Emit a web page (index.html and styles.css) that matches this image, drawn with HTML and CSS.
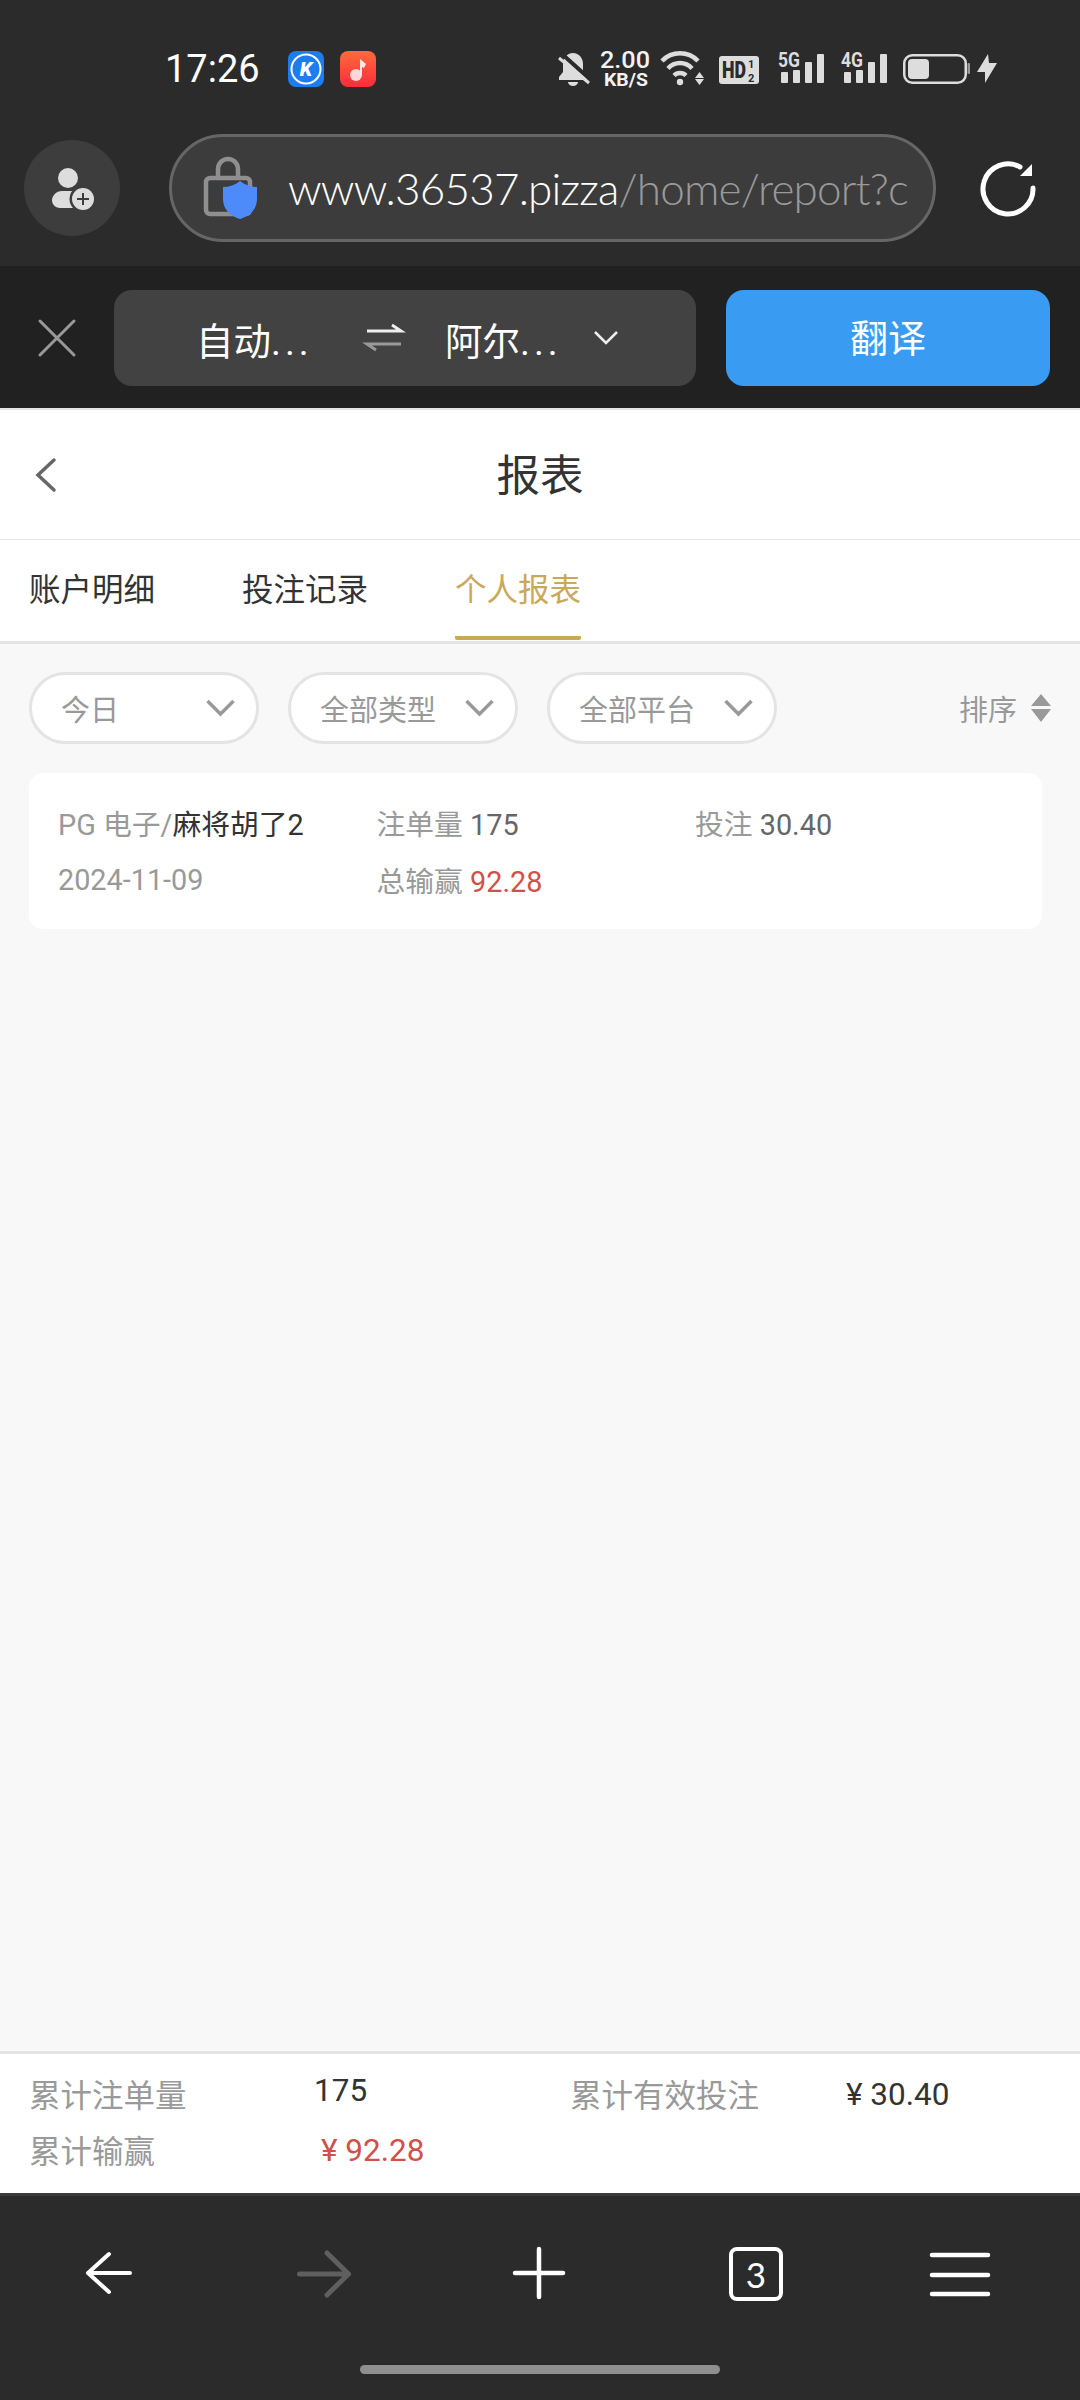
FILE: index.html
```html
<!DOCTYPE html>
<html>
<head>
	<meta http-equiv="Content-Type" content="text/html; charset=utf-8" />
	<title>报表</title>
	<link rel="stylesheet" href="styles.css">
</head>
<body>
	<!-- browser top: status bar and address bar -->
	<div class="top">
		<div class="status">
			<span class="time">17:26</span>
			<svg class="app-icon first" viewBox="0 0 36 36">
				<rect width="36" height="36" rx="8" fill="#1b7df0"/>
				<circle cx="18" cy="18" r="14.500" fill="none" stroke="#fff" stroke-width="2"/>
				<text x="18" y="25" text-anchor="middle" class="k-letter">K</text>
			</svg>
			<svg class="app-icon" viewBox="0 0 36 36">
				<defs><linearGradient id="red" x1="0" y1="0" x2="0" y2="1"><stop offset="0" stop-color="#ff6a3c"/><stop offset="1" stop-color="#fb2c3c"/></linearGradient></defs>
				<rect width="36" height="36" rx="8" fill="url(#red)"/>
				<circle cx="16" cy="24" r="6" fill="#ffd9d9"/>
				<path d="M20 24V8l6 5-2 4-2-1v8z" fill="#ffe9e4"/>
			</svg>
			<div class="status-icons">
				<svg width="41" height="40" viewBox="0 0 41 40">
					<path d="M14 4c-6 0-10 5-10 11v8l-4 5v3h28v-3l-4-5v-8c0-6-4-11-10-11z" fill="#ddd"/>
					<path d="M9 33a5 4 0 0 0 10 0z" fill="#ddd"/>
					<path d="M3 5l30 27" stroke="#2b2b2b" stroke-width="4"/>
					<path d="M0 9l30 25" stroke="#ddd" stroke-width="3"/>
				</svg>
				<svg width="60" height="40" viewBox="0 0 60 40">
					<text x="0" y="19" class="speed" textLength="50" lengthAdjust="spacingAndGlyphs">2.00</text>
					<text x="4" y="37" class="speed-unit" textLength="44" lengthAdjust="spacingAndGlyphs">KB/S</text>
				</svg>
				<svg width="59" height="40" viewBox="0 0 59 40">
					<g fill="none" stroke="#ddd" stroke-width="4.500">
						<path d="M2 12A25 25 0 0 1 38 12"/>
						<path d="M8 19.500A16 16 0 0 1 32 19.500"/>
						<path d="M14 26.500A8.500 8.500 0 0 1 26 26.500"/>
					</g>
					<circle cx="20" cy="33" r="3.200" fill="#ddd"/>
					<path d="M39.500 23l4.500 6h-9zM35 30h9l-4.500 6z" fill="#ddd"/>
				</svg>
				<svg width="59" height="40" viewBox="0 0 59 40">
					<rect y="7" width="40" height="28" rx="3" fill="#ddd"/>
					<text x="3" y="29" class="hd" textLength="24" lengthAdjust="spacingAndGlyphs">HD</text>
					<text x="29" y="19" class="hd-small">1</text>
					<text x="29" y="33" class="hd-small">2</text>
				</svg>
				<svg width="63" height="40" viewBox="0 0 63 40">
					<text x="0" y="18" class="net" textLength="22" lengthAdjust="spacingAndGlyphs">5G</text>
					<rect x="3" y="23" width="7" height="11" rx="1" fill="#ddd"/>
					<rect x="15" y="21" width="7" height="13" rx="1" fill="#ddd"/>
					<rect x="27" y="13" width="7" height="21" rx="1" fill="#ddd"/>
					<rect x="39" y="5" width="7" height="29" rx="1" fill="#ddd"/>
				</svg>
				<svg width="62" height="40" viewBox="0 0 62 40">
					<text x="0" y="18" class="net" textLength="22" lengthAdjust="spacingAndGlyphs">4G</text>
					<rect x="3" y="23" width="7" height="11" rx="1" fill="#ddd"/>
					<rect x="15" y="21" width="7" height="13" rx="1" fill="#ddd"/>
					<rect x="27" y="13" width="7" height="21" rx="1" fill="#ddd"/>
					<rect x="39" y="5" width="7" height="29" rx="1" fill="#ddd"/>
				</svg>
				<svg width="74" height="40" viewBox="0 0 74 40">
					<rect x="1.250" y="6.250" width="61.500" height="27.500" rx="8" fill="none" stroke="#ddd" stroke-width="2.500"/>
					<rect x="5" y="10" width="21" height="20" rx="4" fill="#ddd"/>
					<rect x="64.500" y="14" width="2.500" height="11" rx="1" fill="#999"/>
				</svg>
				<svg width="20" height="40" viewBox="0 0 20 40">
					<path d="M11 5L0 23h8v11l12-20h-8z" fill="#ddd"/>
				</svg>
			</div>
		</div>
		<div class="address-row">
			<div class="avatar">
				<svg width="96" height="96" viewBox="0 0 96 96">
					<circle cx="44" cy="38" r="10" fill="#ddd"/>
					<path d="M38 51h16c6 0 10 4 10 9s-4 8-10 8H36c-5 0-8-4-8-8s4-9 10-9z" fill="#ddd"/>
					<circle cx="59" cy="59" r="13.500" fill="#3d3d3d"/>
					<circle cx="59" cy="59" r="11" fill="#ddd"/>
					<path d="M59 53v12M53 59h12" stroke="#3d3d3d" stroke-width="2"/>
				</svg>
			</div>
			<div class="address">
				<svg class="lock" width="53" height="62" viewBox="0 0 53 62">
					<rect x="2" y="21" width="44" height="36" rx="4" fill="none" stroke="#8f8f8f" stroke-width="4.500"/>
					<path d="M14 21V12a10 10 0 0 1 20 0v9" fill="none" stroke="#8f8f8f" stroke-width="4.500"/>
					<path d="M36 24c5 4 11 6 17 6v12c0 10-7 17-17 20-10-3-17-10-17-20V30c6 0 12-2 17-6z" fill="#4d8bfb"/>
				</svg>
				<span class="url">www.36537.pizza<span class="url-path">/home/report?c</span></span>
			</div>
			<svg class="refresh" width="60" height="60" viewBox="0 0 60 60">
				<path d="M42 9A25 25 0 1 0 55 30" fill="none" stroke="#fff" stroke-width="5" stroke-linecap="round"/>
				<path d="M54 6v12H42z" fill="#fff"/>
			</svg>
		</div>
	</div>

	<!-- translate bar -->
	<div class="translate">
		<svg class="close" width="36" height="36" viewBox="0 0 36 36">
			<path d="M1 1l34 34M35 1L1 35" stroke="#999" stroke-width="3" stroke-linecap="round"/>
		</svg>
		<div class="lang-box">
			<span class="lang lang-from">自动<span class="dots">...</span></span>
			<svg class="swap" width="34" height="28" viewBox="0 0 34 28">
				<path d="M0 7h34L25 1" fill="none" stroke="#eee" stroke-width="3"/>
				<path d="M34 20H0l9 6" fill="none" stroke="#999" stroke-width="3"/>
			</svg>
			<span class="lang lang-to">阿尔<span class="dots">...</span></span>
			<svg class="lang-arrow" width="24" height="14" viewBox="0 0 24 14">
				<path d="M1 1l11 11L23 1" fill="none" stroke="#eee" stroke-width="2.500"/>
			</svg>
		</div>
		<div class="translate-btn">翻译</div>
	</div>

	<!-- page -->
	<div class="page">
		<div class="header">
			<svg class="back" width="21" height="34" viewBox="0 0 21 34">
				<path d="M19 2L3 17l16 15" fill="none" stroke="#666" stroke-width="3.500" stroke-linecap="round"/>
			</svg>
			<div class="title">报表</div>
		</div>
		<div class="tabs">
			<div class="tab">账户明细</div>
			<div class="tab">投注记录</div>
			<div class="tab active">个人报表</div>
		</div>
		<div class="filters">
			<div class="pill">今日
				<svg class="chev" width="29" height="18" viewBox="0 0 29 18"><path d="M1.500 2l13 13 13-13" fill="none" stroke="#999" stroke-width="3.500"/></svg>
			</div>
			<div class="pill">全部类型
				<svg class="chev" width="29" height="18" viewBox="0 0 29 18"><path d="M1.500 2l13 13 13-13" fill="none" stroke="#999" stroke-width="3.500"/></svg>
			</div>
			<div class="pill">全部平台
				<svg class="chev" width="29" height="18" viewBox="0 0 29 18"><path d="M1.500 2l13 13 13-13" fill="none" stroke="#999" stroke-width="3.500"/></svg>
			</div>
			<div class="sort">排序
				<svg width="20" height="28" viewBox="0 0 20 28"><path d="M10 0l10 12H0zM0 15h20L10 28z" fill="#999"/></svg>
			</div>
		</div>
		<div class="card">
			<div class="cell">PG 电子/<span class="dark">麻将胡了2</span></div>
			<div class="cell">注单量 <span class="num">175</span></div>
			<div class="cell">投注 <span class="num">30.40</span></div>
			<div class="cell">2024-11-09</div>
			<div class="cell">总输赢 <span class="red">92.28</span></div>
		</div>
	</div>

	<!-- totals -->
	<div class="summary">
		<div class="label">累计注单量</div>
		<div class="value raised">175</div>
		<div class="label">累计有效投注</div>
		<div class="value">¥ 30.40</div>
		<div class="label">累计输赢</div>
		<div class="value red indent">¥ 92.28</div>
	</div>

	<!-- browser bottom bar -->
	<div class="bottom">
		<div class="nav">
			<svg width="80" height="64" viewBox="0 0 80 64"><path d="M61 29H19M40 10L19 29l21 19" fill="none" stroke="#fff" stroke-width="4" stroke-linecap="round" stroke-linejoin="round"/></svg>
			<svg width="80" height="64" viewBox="0 0 80 64"><path d="M15.500 30h49M43 9l21.500 21L43 51" fill="none" stroke="#5f5f5f" stroke-width="5" stroke-linecap="round" stroke-linejoin="round"/></svg>
			<svg width="80" height="64" viewBox="0 0 80 64"><path d="M16 29h48M40 5v48" fill="none" stroke="#fff" stroke-width="4.500" stroke-linecap="round"/></svg>
			<div class="tab-count"><span>3</span></div>
			<svg width="64" height="64" viewBox="0 0 64 64"><path d="M4 11h56M4 31h56M4 50h56" fill="none" stroke="#fff" stroke-width="4.500" stroke-linecap="round"/></svg>
		</div>
		<div class="home-bar"></div>
	</div>
</body>
</html>
```

FILE: styles.css
```css
* {
	box-sizing: border-box;
}

body {
	margin: 0;
	width: 1080px;
	height: 2400px;
	display: flex;
	flex-direction: column;
	background-color: #f8f8f8;
	font-family: Roboto, "Noto Sans CJK SC", sans-serif;
	overflow: hidden;
}

svg {
	display: block;
	flex: none;
	overflow: visible;
}

/* top of the browser */
.top {
	height: 266px;
	background-color: #2b2b2b;
}

.status {
	height: 134px;
	padding: 4px 83px 0 165px;
	display: flex;
	align-items: center;
}

.time {
	width: 93px;
	color: #fff;
	font-size: 38px;
	white-space: nowrap;
}

.app-icon {
	width: 36px;
	height: 36px;
	margin-left: 16px;
}

.app-icon.first {
	margin-left: 30px;
}

.k-letter {
	fill: #fff;
	font-size: 20px;
	font-weight: 900;
	font-style: italic;
	font-family: Roboto, sans-serif;
}

.status-icons {
	margin-left: auto;
	display: flex;
}

.speed {
	fill: #f2f2f2;
	font-size: 23px;
	font-weight: 500;
	font-family: Roboto, sans-serif;
}

.speed-unit {
	fill: #f2f2f2;
	font-size: 18px;
	font-weight: 700;
	font-family: Roboto, sans-serif;
}

.hd {
	fill: #2b2b2b;
	font-size: 24px;
	font-weight: 900;
	font-family: Roboto, sans-serif;
}

.hd-small {
	fill: #2b2b2b;
	font-size: 11px;
	font-weight: 700;
	font-family: Roboto, sans-serif;
}

.net {
	fill: #ddd;
	font-size: 21px;
	font-weight: 700;
	font-family: Roboto, sans-serif;
}

.address-row {
	display: flex;
	align-items: center;
	padding-left: 24px;
}

.avatar {
	width: 96px;
	height: 96px;
	border-radius: 50%;
	background-color: #3d3d3d;
}

.address {
	width: 767px;
	height: 108px;
	margin-left: 49px;
	padding-left: 32px;
	display: flex;
	align-items: center;
	background-color: #3c3c3c;
	border: 3px solid #666;
	border-radius: 54px;
}

.url {
	margin-left: 31px;
	color: #fff;
	font-family: Lato, sans-serif;
	font-size: 44px;
	font-weight: 300;
	letter-spacing: -0.8px;
	white-space: nowrap;
}

.url-path {
	color: #999;
}

.refresh {
	margin-left: 42px;
}

/* translate bar */
.translate {
	height: 142px;
	padding: 24px 30px 0 39px;
	display: flex;
	background-color: #212121;
}

.close {
	margin: 30px 39px 0 0;
}

.lang-box {
	width: 582px;
	height: 96px;
	display: flex;
	align-items: center;
	color: #fff;
	background-color: #424242;
	border-radius: 18px;
}

.lang {
	font-size: 37.500px;
	white-space: nowrap;
}

.lang-from {
	width: 171px;
	margin-left: 82px;
}

.lang-to {
	width: 149px;
	margin-left: 44px;
}

.dots {
	letter-spacing: 4px;
}

.translate-btn {
	width: 324px;
	height: 96px;
	margin-left: 30px;
	color: #fff;
	font-size: 38px;
	line-height: 98px;
	text-align: center;
	background-color: #399cf2;
	border-radius: 18px;
}

/* page */
.page {
	flex: 1;
	border-top: 2px solid #e4e4e4;
}

.header {
	height: 130px;
	display: grid;
	grid-template-columns: 1fr auto 1fr;
	align-items: center;
	padding-left: 35px;
	padding-right: 35px;
	background-color: #fff;
	border-bottom: 1px solid #e4e4e4;
}

.title {
	margin-bottom: 4px;
	color: #333;
	font-size: 43.500px;
}

.tabs {
	height: 104px;
	display: flex;
	gap: 87px;
	padding-left: 29px;
	background-color: #fff;
	border-bottom: 3px solid #e4e4e4;
}

.tab {
	width: 126px;
	height: 100px;
	color: #333;
	font-size: 31.500px;
	line-height: 102px;
	white-space: nowrap;
}

.tab.active {
	color: #c9a857;
	border-bottom: 4px solid #c9a857;
	border-radius: 0 0 2px 2px;
}

.filters {
	height: 129px;
	padding: 28px 29px 0;
	display: flex;
	align-items: flex-start;
	gap: 29px;
}

.pill {
	width: 230px;
	height: 72px;
	padding: 0 21px 0 29px;
	display: flex;
	align-items: center;
	justify-content: space-between;
	color: #999;
	font-size: 29px;
	background-color: #fff;
	border: 3px solid #e4e4e4;
	border-radius: 36px;
}

.sort {
	height: 72px;
	margin-left: auto;
	display: flex;
	align-items: center;
	gap: 14px;
	color: #999;
	font-size: 29px;
}

.card {
	width: 1013px;
	height: 156px;
	margin-left: 29px;
	padding: 21px 0 0 29px;
	display: grid;
	grid-template-columns: 318.500px 318.500px 1fr;
	grid-auto-rows: 57px;
	align-items: center;
	color: #999;
	font-size: 28.800px;
	background-color: #fff;
	border-radius: 14px;
}

.dark {
	color: #333;
}

.num {
	color: #666;
}

.red {
	color: #d0504a;
}

/* totals */
.summary {
	height: 142px;
	padding: 11px 0 0 29px;
	display: grid;
	grid-template-columns: 286px 255px 276px 1fr;
	grid-auto-rows: 56px;
	align-items: center;
	background-color: #fff;
	border-top: 3px solid #e4e4e4;
}

.label {
	color: #999;
	font-size: 31.500px;
	white-space: nowrap;
}

.value {
	margin-top: 2px;
	color: #333;
	font-size: 31.500px;
	white-space: nowrap;
}

.value.red {
	color: #d0504a;
}

.raised {
	margin-top: 0;
	margin-bottom: 5px;
	margin-left: -1px;
}

.indent {
	margin-left: 6px;
}

/* bottom of the browser */
.bottom {
	height: 207px;
	background-color: #2b2b2b;
	border-top: 3px solid #3a3a3a;
}

.nav {
	padding: 48px 0 0 69px;
	display: flex;
	gap: 135px;
}

.tab-count {
	width: 54px;
	height: 54px;
	margin: 3px 10px 0 15px;
	display: flex;
	align-items: center;
	justify-content: center;
	color: #fff;
	font-size: 35px;
	font-family: Lato, sans-serif;
	font-weight: 400;
	border: 4px solid #fff;
	border-radius: 8px;
}

.home-bar {
	width: 360px;
	height: 9px;
	margin: 57px 0 0 360px;
	background-color: #8f8f8f;
	border-radius: 5px;
}
```
